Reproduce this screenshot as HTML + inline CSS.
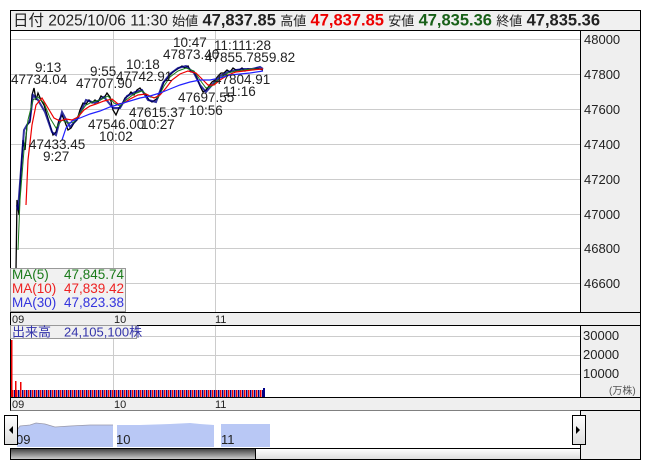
<!DOCTYPE html>
<html><head><meta charset="utf-8"><style>
body{margin:0;background:#fff;width:653px;height:470px;overflow:hidden;font-family:"Liberation Sans","Noto Sans CJK JP",sans-serif}
svg text{font-family:"Liberation Sans","Noto Sans CJK JP",sans-serif}
</style></head><body>
<svg width="653" height="470" viewBox="0 0 653 470" xmlns="http://www.w3.org/2000/svg">
<defs>
<pattern id="vb" x="12" y="0" width="4" height="10" patternUnits="userSpaceOnUse">
<rect x="0" y="0" width="1.5" height="10" fill="#e00"/><rect x="2" y="0" width="1.5" height="10" fill="#008"/>
</pattern>
<linearGradient id="sg" x1="0" y1="0" x2="0" y2="1"><stop offset="0" stop-color="#444"/><stop offset="1" stop-color="#ccc"/></linearGradient>
<linearGradient id="sg2" x1="0" y1="0" x2="0" y2="1"><stop offset="0" stop-color="#fff"/><stop offset="1" stop-color="#ddd"/></linearGradient>
</defs>
<rect x="10.5" y="10.5" width="630" height="20" fill="#f0f0f0" stroke="#000"/>
<text x="13" y="25.5" font-size="15.5" fill="#222">日付 2025/10/06 11:30 <tspan font-size="13">始値</tspan> <tspan font-weight="bold" font-size="16.5">47,837.85</tspan> <tspan font-size="13">高値</tspan> <tspan font-weight="bold" font-size="16.5" fill="#e00">47,837.85</tspan> <tspan font-size="13">安値</tspan> <tspan font-weight="bold" font-size="16.5" fill="#186018">47,835.36</tspan> <tspan font-size="13">終値</tspan> <tspan font-weight="bold" font-size="16.5">47,835.36</tspan></text>
<rect x="10.5" y="30.5" width="570" height="282" fill="#fff" stroke="#000"/>
<rect x="580.5" y="30.5" width="60" height="282" fill="#efefef" stroke="#000"/>
<g stroke="#ccc" stroke-width="1">
<line x1="11" y1="39.5" x2="580" y2="39.5"/><line x1="11" y1="74.5" x2="580" y2="74.5"/><line x1="11" y1="109.5" x2="580" y2="109.5"/><line x1="11" y1="144.5" x2="580" y2="144.5"/><line x1="11" y1="179.5" x2="580" y2="179.5"/><line x1="11" y1="214.5" x2="580" y2="214.5"/><line x1="11" y1="248.5" x2="580" y2="248.5"/><line x1="11" y1="283.5" x2="580" y2="283.5"/>
<line x1="113.5" y1="31" x2="113.5" y2="312"/><line x1="215.5" y1="31" x2="215.5" y2="312"/>
</g>
<g font-size="13" fill="#222">
<text x="584" y="44">48000</text><text x="584" y="79">47800</text><text x="584" y="114">47600</text><text x="584" y="149">47400</text><text x="584" y="184">47200</text><text x="584" y="219">47000</text><text x="584" y="253">46800</text><text x="584" y="288">46600</text>
</g>
<polyline fill="none" stroke="#000" stroke-width="1.3" points="16,270 17,200 19,215 21,170 23,140 25,150 27,125 30,122 32,95 34,88 36,100 38,93 41,100 44,105 47,115 50,125 53,135 56,132 59,120 62,115 65,122 68,130 71,128 74,123 77,120 80,110 83,103 86,104 89,100 92,103 95,100 98,102 101,96 104,98 107,93 110,97 113,110 116,115 119,108 122,104 125,98 128,96 131,92 134,95 137,90 140,88 143,92 146,95 149,100 152,102 155,100 158,98 161,90 164,82 167,79 170,75 173,72 176,70 179,68 182,66 185,68 188,66 191,72 194,72 197,78 200,86 203,92 206,90 209,86 212,82 215,80 218,76 221,73 224,73 227,70 230,72 233,68 236,70 239,70 242,68 245,71 248,69 251,70 254,69 257,68 260,69 263,70"/>
<polyline fill="none" stroke="#008" stroke-width="2" points="17,205 18,210 24,130 30,120 33,95 38,100 45,112 52,132 56,135 62,112 70,127 78,118 86,100 95,103 104,97 113,108 120,108 127,96 135,92 142,90 148,100 156,102 163,83 170,74 178,68 186,66 194,73 200,85 206,92 212,85 220,76 228,72 236,70 244,69 252,69 260,67 263,69" opacity="0.8"/>
<polyline fill="none" stroke="#1a7a1a" stroke-width="1" points="18,250 20,200 24,150 28,120 33,100 38,97 44,103 50,118 56,128 62,120 68,123 74,122 80,113 86,105 92,102 100,100 108,96 114,103 120,106 126,100 134,94 142,91 150,97 158,98 164,86 170,77 178,71 186,68 194,71 200,80 206,88 212,86 220,78 228,73 236,71 244,70 252,69 263,69"/>
<polyline fill="none" stroke="#e00" stroke-width="1.2" points="26,205 28,160 32,125 36,105 42,98 48,108 54,118 60,121 66,119 72,120 78,117 84,110 90,106 96,104 104,101 112,99 118,104 124,103 130,99 138,95 146,94 154,98 160,95 166,88 172,80 180,74 188,71 196,73 202,79 208,85 214,85 220,80 228,75 236,72 244,71 252,70 263,69"/>
<polyline fill="none" stroke="#22f" stroke-width="1.2" points="62,140 66,128 72,121 80,118 90,114 100,111 110,107 120,104 130,101 140,98 150,96 160,93 170,89 180,85 190,82 200,80 210,80 220,78 230,75 240,74 250,73 263,71"/>
<g font-size="13.5" fill="#222">
<text x="35" y="72">9:13</text><text x="11" y="84">47734.04</text>
<text x="90" y="76">9:55</text><text x="76" y="88">47707.90</text>
<text x="126" y="69">10:18</text><text x="116" y="81">47742.91</text>
<text x="173" y="47">10:47</text><text x="163" y="59">47873.40</text>
<text x="214" y="50">11:111:28</text><text x="205" y="62">47855.7859.82</text>
<text x="214" y="84">47804.91</text><text x="223" y="96">11:16</text>
<text x="178" y="102">47697.55</text><text x="189" y="115">10:56</text>
<text x="129" y="117">47615.37</text><text x="141" y="129">10:27</text>
<text x="88" y="129">47546.00</text><text x="99" y="141">10:02</text>
<text x="29" y="149">47433.45</text><text x="43" y="161">9:27</text>
</g>
<rect x="10.5" y="268.5" width="115" height="43" fill="#f0f0f0" fill-opacity="0.9" stroke="#999"/>
<g font-size="13.5"><text x="12" y="279" fill="#1a7a1a">MA(5)</text><text x="64" y="279" fill="#1a7a1a">47,845.74</text>
<text x="12" y="293" fill="#e22">MA(10)</text><text x="64" y="293" fill="#e22">47,839.42</text>
<text x="12" y="307" fill="#33d">MA(30)</text><text x="64" y="307" fill="#33d">47,823.38</text></g>
<rect x="10.5" y="312.5" width="630" height="13" fill="#efefef" stroke="#000"/>
<g font-size="11" fill="#222"><text x="12" y="323">09</text><text x="114" y="323">10</text><text x="215" y="323">11</text></g>
<rect x="10.5" y="325.5" width="570" height="72" fill="#fff" stroke="#000"/>
<rect x="580.5" y="325.5" width="60" height="72" fill="#efefef" stroke="#000"/>
<g stroke="#ccc"><line x1="11" y1="336.5" x2="580" y2="336.5"/><line x1="11" y1="355.5" x2="580" y2="355.5"/><line x1="11" y1="374.5" x2="580" y2="374.5"/><line x1="113.5" y1="326" x2="113.5" y2="397"/><line x1="215.5" y1="326" x2="215.5" y2="397"/></g>
<rect x="12" y="390" width="252" height="7" fill="url(#vb)"/>
<rect x="11" y="340" width="1.5" height="57" fill="#e00"/>
<rect x="15" y="381" width="1.5" height="16" fill="#e00"/><rect x="20" y="382" width="1.5" height="15" fill="#e00"/>
<rect x="263" y="388" width="2" height="9" fill="#008"/>
<rect x="10.5" y="325.5" width="126" height="13" fill="#f0f0f0" stroke="#999"/>
<text x="12" y="336.5" font-size="13" fill="#33a">出来高　24,105,100株</text>
<g font-size="13" fill="#222"><text x="583" y="340">30000</text><text x="583" y="359">20000</text><text x="583" y="378">10000</text></g>
<text x="609" y="394" font-size="10" fill="#555">(万株)</text>
<rect x="10.5" y="397.5" width="630" height="13" fill="#efefef" stroke="#000"/>
<g font-size="11" fill="#222"><text x="12" y="408">09</text><text x="114" y="408">10</text><text x="215" y="408">11</text></g>
<rect x="10.5" y="410.5" width="570" height="38" fill="#fff"/>
<rect x="580.5" y="410.5" width="60" height="49" fill="#efefef" stroke="#000"/>
<polygon fill="#b9c8f5" points="17,447 17,430 20,426 30,425 36,423 45,424 55,427 70,426 90,425 113,425 113,447"/>
<polygon fill="#b9c8f5" points="117,447 117,425 140,425 170,424 190,423 200,424 214,425 214,447"/>
<polygon fill="#b9c8f5" points="221,447 221,424 240,424 270,424 270,447"/>
<polyline fill="none" stroke="#99a" stroke-width="0.8" points="17,430 20,426 30,425 36,423 45,424 55,427 70,426 90,425 113,425"/>
<g font-size="13" fill="#222"><text x="16" y="444">09</text><text x="116" y="444">10</text><text x="221" y="444">11</text></g>
<rect x="4.5" y="415.5" width="13" height="29" fill="url(#sg2)" stroke="#000"/>
<polygon points="9,430 13,426 13,434" fill="#000"/>
<rect x="572.5" y="415.5" width="13" height="29" fill="url(#sg2)" stroke="#000"/>
<polygon points="580,430 576,426 576,434" fill="#000"/>
<rect x="10.5" y="448.5" width="570" height="11" fill="url(#sg2)" stroke="#000"/>
<rect x="11" y="449" width="244" height="10" fill="url(#sg)"/>
<line x1="255.5" y1="449" x2="255.5" y2="459" stroke="#000"/>
</svg>
</body></html>
